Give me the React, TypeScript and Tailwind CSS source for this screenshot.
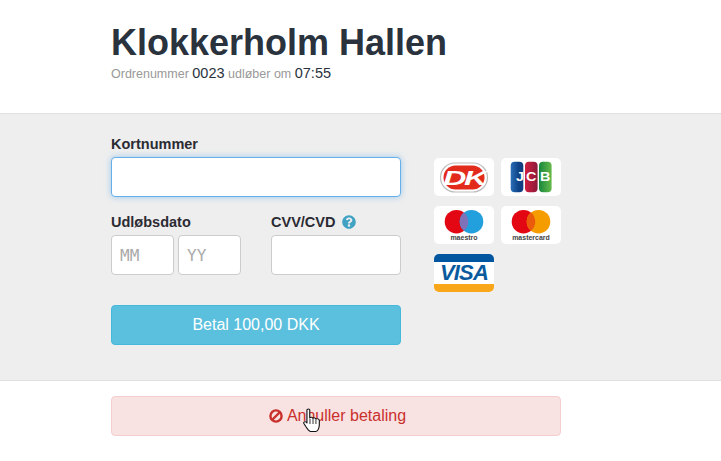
import React from 'react';
import { FaQuestionCircle } from 'react-icons/fa';

const CardTile: React.FC<{ children: React.ReactNode }> = ({ children }) => (
  <div className="w-[60px] h-[38px] rounded-[5px] overflow-hidden bg-white">
    {children}
  </div>
);

const DankortLogo = () => (
  <svg width="60" height="38" viewBox="0 0 60 38">
    <rect x="6.5" y="5" width="47" height="29" rx="14.5" fill="#fff" stroke="#bdbdbd" strokeWidth="1.2" />
    <rect x="9.5" y="7.5" width="41" height="24" rx="12" fill="#e32b1c" />
    <g transform="translate(30 26.5) scale(1.6 1)">
      <text x="0" y="0" textAnchor="middle" fill="#fff" className="font-['Liberation_Sans',sans-serif] italic font-bold text-[20px] tracking-[-1.5px]">DK</text>
    </g>
  </svg>
);

const JcbLogo = () => (
  <svg width="60" height="38" viewBox="0 0 60 38">
    <defs>
      <linearGradient id="jb" x1="0" x2="1"><stop offset="0" stopColor="#2a6fb8" /><stop offset="0.6" stopColor="#0f4488" /><stop offset="1" stopColor="#123a80" /></linearGradient>
      <linearGradient id="jr" x1="0" x2="1"><stop offset="0" stopColor="#d11f3f" /><stop offset="1" stopColor="#8a1a3c" /></linearGradient>
      <linearGradient id="jg" x1="0" x2="1"><stop offset="0" stopColor="#17863c" /><stop offset="1" stopColor="#66ba4a" /></linearGradient>
    </defs>
    <rect x="9.7" y="3.7" width="12.6" height="30.6" rx="4" fill="url(#jb)" />
    <rect x="24" y="3.7" width="12.6" height="30.6" rx="4" fill="url(#jr)" />
    <rect x="38" y="3.7" width="12.6" height="30.6" rx="4" fill="url(#jg)" />
    <g className="font-['Liberation_Sans',sans-serif] font-bold text-[12px]" fill="#fff">
      <text x="19" y="23.5" textAnchor="middle" transform="translate(19 0) scale(1.2 1) translate(-19 0)">J</text>
      <text x="30.3" y="23.5" textAnchor="middle" transform="translate(30.3 0) scale(1.2 1) translate(-30.3 0)">C</text>
      <text x="44.3" y="23.5" textAnchor="middle" transform="translate(44.3 0) scale(1.2 1) translate(-44.3 0)">B</text>
    </g>
  </svg>
);

const CirclesLogo: React.FC<{ right: string; overlap: string; label: string }> = ({ right, overlap, label }) => (
  <svg width="60" height="38" viewBox="0 0 60 38">
    <circle cx="22.5" cy="15.7" r="11.8" fill="#e30613" />
    <circle cx="37.5" cy="15.7" r="11.8" fill={right} />
    <path d="M30 6.6 A11.8 11.8 0 0 1 30 24.8 A11.8 11.8 0 0 1 30 6.6 Z" fill={overlap} />
    <text x="30" y="34" textAnchor="middle" fill="#444" className="font-['Liberation_Sans',sans-serif] font-bold text-[7px]">{label}</text>
  </svg>
);

const VisaLogo = () => (
  <div className="w-full h-full flex flex-col">
    <div className="h-[9px] bg-[#00579f]" />
    <div className="flex-1 bg-white flex items-center justify-center font-['Liberation_Sans',sans-serif] italic font-bold text-[22px] leading-none tracking-[-0.8px] text-[#0a5a9e]">VISA</div>
    <div className="h-[9px] bg-[#faa61a]" />
  </div>
);

const inputClass = 'h-10 bg-white border border-[#ccc] rounded-[4px] outline-none';
const labelClass = 'text-[14.5px] leading-[20px] font-bold text-[#2b2b33]';
const monoClass = "w-[63px] px-2 text-[16px] font-['DejaVu_Sans_Mono',monospace] placeholder:text-[#aaa]";

export default function App() {
  return (
    <div className="w-[721px] h-[461px] bg-white overflow-hidden font-['Liberation_Sans',Arial,sans-serif]">
      <header className="h-[114px] border-b border-[#e0e0e0] pl-[111px] pt-[21px]">
        <h1 className="text-[36px] leading-[44px] font-bold text-[#29323d]">Klokkerholm Hallen</h1>
        <p className="text-[12.5px] leading-[17px] text-[#999]">
          Ordrenummer <span className="text-[14.5px] text-[#29323d]">0023</span> udløber om{' '}
          <span className="text-[14.5px] text-[#29323d]">07:55</span>
        </p>
      </header>

      <main className="h-[267px] bg-[#eeeeee] border-b border-[#e0e0e0] pl-[111px] pt-[20px] flex">
        <form className="w-[290px]">
          <label className={`block ${labelClass}`}>Kortnummer</label>
          <input className={`block w-[290px] mt-[3px] ${inputClass} !border-[#66afe9] shadow-[0_0_6px_rgba(102,175,233,0.6)]`} />

          <div className="flex mt-[15px]">
            <div className="w-[160px]">
              <label className={`block ${labelClass}`}>Udløbsdato</label>
              <div className="flex gap-[4px] mt-[3px]">
                <input placeholder="MM" className={`${monoClass} ${inputClass}`} />
                <input placeholder="YY" className={`${monoClass} ${inputClass}`} />
              </div>
            </div>
            <div className="w-[130px]">
              <label className={`flex items-center gap-[7px] ${labelClass}`}>
                CVV/CVD <FaQuestionCircle className="w-[14px] h-[14px] text-[#41a3c4]" />
              </label>
              <input className={`block w-[130px] mt-[3px] ${inputClass}`} />
            </div>
          </div>

          <button type="button" className="block w-[290px] h-10 mt-[30px] rounded-[4px] bg-[#5bc0de] border border-[#46b8da] text-white text-[16px]">
            Betal 100,00 DKK
          </button>
        </form>

        <div className="ml-[33px] mt-[24px] grid grid-cols-[60px_60px] auto-rows-[38px] gap-x-[7px] gap-y-[10px] content-start">
          <CardTile><DankortLogo /></CardTile>
          <CardTile><JcbLogo /></CardTile>
          <CardTile><CirclesLogo right="#229fdd" overlap="#7f72b8" label="maestro" /></CardTile>
          <CardTile><CirclesLogo right="#f59d00" overlap="#ea5b0c" label="mastercard" /></CardTile>
          <CardTile><VisaLogo /></CardTile>
        </div>
      </main>

      <div className="pl-[111px] pt-[15px]">
        <button type="button" className="relative flex items-center justify-center gap-[4px] w-[450px] h-10 pl-[3px] rounded-[4px] bg-[#f9e2e2] border border-[#f3cfcf] text-[#c9302c] text-[16px]">
          <svg width="14" height="14" viewBox="0 0 14 14" fill="none" stroke="currentColor" strokeWidth="2.4">
            <circle cx="7" cy="7" r="5.6" />
            <path d="M3 11 L11 3" />
          </svg>
          <span>Annuller betaling</span>
          {/* mouse pointer sitting on the button */}
          <svg className="absolute left-[191px] top-[11px]" width="18" height="25" viewBox="0 0 16 25" preserveAspectRatio="none">
            <path d="M3.5 2 C3.5 .6 6 .6 6 2 V10 C6.6 8.8 8.6 9 8.8 10.4 C9.6 9.5 11.2 9.8 11.4 11 C12.4 10.3 14.5 10.8 14.5 12.5 V17 C14.5 20 13 23.5 11.5 23.5 H7 C5 23.5 4 21 2.5 18.5 L.8 15.5 C.2 14 1.8 13 3 14.2 L3.5 15 Z" fill="#fff" stroke="#111" strokeWidth="1" strokeLinejoin="round" />
            <path d="M6.2 11 V16 M8.9 11 V16 M11.5 11.5 V16" stroke="#111" strokeWidth="0.8" fill="none" />
          </svg>
        </button>
      </div>
    </div>
  );
}
